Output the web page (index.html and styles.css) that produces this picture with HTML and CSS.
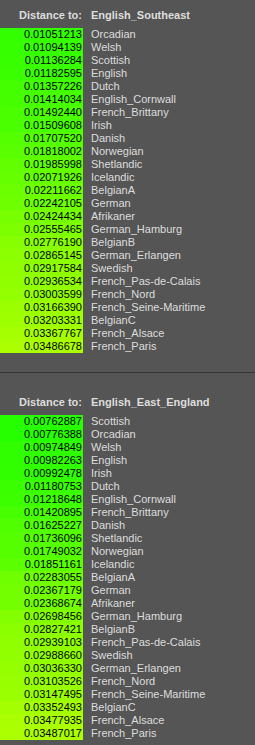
FILE: index.html
```html
<!DOCTYPE html>
<html>
<head>
<meta charset="utf-8">
<link rel="stylesheet" href="styles.css">
</head>
<body>
<section class="block first">
  <div class="row head"><div class="lbl">Distance to:</div><div class="name">English_Southeast</div></div>
  <div class="rows">
    <div class="row"><div class="val" style="background:#34ff00">0.01051213</div><div class="name">Orcadian</div></div>
    <div class="row"><div class="val" style="background:#36ff00">0.01094139</div><div class="name">Welsh</div></div>
    <div class="row"><div class="val" style="background:#38ff00">0.01136284</div><div class="name">Scottish</div></div>
    <div class="row"><div class="val" style="background:#3aff00">0.01182595</div><div class="name">English</div></div>
    <div class="row"><div class="val" style="background:#43ff00">0.01357226</div><div class="name">Dutch</div></div>
    <div class="row"><div class="val" style="background:#45ff00">0.01414034</div><div class="name">English_Cornwall</div></div>
    <div class="row"><div class="val" style="background:#49ff00">0.01492440</div><div class="name">French_Brittany</div></div>
    <div class="row"><div class="val" style="background:#4aff00">0.01509608</div><div class="name">Irish</div></div>
    <div class="row"><div class="val" style="background:#54ff00">0.01707520</div><div class="name">Danish</div></div>
    <div class="row"><div class="val" style="background:#59ff00">0.01818002</div><div class="name">Norwegian</div></div>
    <div class="row"><div class="val" style="background:#61ff00">0.01985998</div><div class="name">Shetlandic</div></div>
    <div class="row"><div class="val" style="background:#66ff00">0.02071926</div><div class="name">Icelandic</div></div>
    <div class="row"><div class="val" style="background:#6cff00">0.02211662</div><div class="name">BelgianA</div></div>
    <div class="row"><div class="val" style="background:#6eff00">0.02242105</div><div class="name">German</div></div>
    <div class="row"><div class="val" style="background:#77ff00">0.02424434</div><div class="name">Afrikaner</div></div>
    <div class="row"><div class="val" style="background:#7dff00">0.02555465</div><div class="name">German_Hamburg</div></div>
    <div class="row"><div class="val" style="background:#88ff00">0.02776190</div><div class="name">BelgianB</div></div>
    <div class="row"><div class="val" style="background:#8cff00">0.02865145</div><div class="name">German_Erlangen</div></div>
    <div class="row"><div class="val" style="background:#8fff00">0.02917584</div><div class="name">Swedish</div></div>
    <div class="row"><div class="val" style="background:#90ff00">0.02936534</div><div class="name">French_Pas-de-Calais</div></div>
    <div class="row"><div class="val" style="background:#93ff00">0.03003599</div><div class="name">French_Nord</div></div>
    <div class="row"><div class="val" style="background:#9bff00">0.03166390</div><div class="name">French_Seine-Maritime</div></div>
    <div class="row"><div class="val" style="background:#9dff00">0.03203331</div><div class="name">BelgianC</div></div>
    <div class="row"><div class="val" style="background:#a5ff00">0.03367767</div><div class="name">French_Alsace</div></div>
    <div class="row"><div class="val" style="background:#abff00">0.03486678</div><div class="name">French_Paris</div></div>
  </div>
</section>
<hr class="sep">
<section class="block second">
  <div class="row head"><div class="lbl">Distance to:</div><div class="name">English_East_England</div></div>
  <div class="rows">
    <div class="row"><div class="val" style="background:#25ff00">0.00762887</div><div class="name">Scottish</div></div>
    <div class="row"><div class="val" style="background:#26ff00">0.00776388</div><div class="name">Orcadian</div></div>
    <div class="row"><div class="val" style="background:#30ff00">0.00974849</div><div class="name">Welsh</div></div>
    <div class="row"><div class="val" style="background:#30ff00">0.00982263</div><div class="name">English</div></div>
    <div class="row"><div class="val" style="background:#31ff00">0.00992478</div><div class="name">Irish</div></div>
    <div class="row"><div class="val" style="background:#3aff00">0.01180753</div><div class="name">Dutch</div></div>
    <div class="row"><div class="val" style="background:#3cff00">0.01218648</div><div class="name">English_Cornwall</div></div>
    <div class="row"><div class="val" style="background:#46ff00">0.01420895</div><div class="name">French_Brittany</div></div>
    <div class="row"><div class="val" style="background:#50ff00">0.01625227</div><div class="name">Danish</div></div>
    <div class="row"><div class="val" style="background:#55ff00">0.01736096</div><div class="name">Shetlandic</div></div>
    <div class="row"><div class="val" style="background:#56ff00">0.01749032</div><div class="name">Norwegian</div></div>
    <div class="row"><div class="val" style="background:#5bff00">0.01851161</div><div class="name">Icelandic</div></div>
    <div class="row"><div class="val" style="background:#70ff00">0.02283055</div><div class="name">BelgianA</div></div>
    <div class="row"><div class="val" style="background:#74ff00">0.02367179</div><div class="name">German</div></div>
    <div class="row"><div class="val" style="background:#74ff00">0.02368674</div><div class="name">Afrikaner</div></div>
    <div class="row"><div class="val" style="background:#84ff00">0.02698456</div><div class="name">German_Hamburg</div></div>
    <div class="row"><div class="val" style="background:#8bff00">0.02827421</div><div class="name">BelgianB</div></div>
    <div class="row"><div class="val" style="background:#90ff00">0.02939103</div><div class="name">French_Pas-de-Calais</div></div>
    <div class="row"><div class="val" style="background:#92ff00">0.02988660</div><div class="name">Swedish</div></div>
    <div class="row"><div class="val" style="background:#95ff00">0.03036330</div><div class="name">German_Erlangen</div></div>
    <div class="row"><div class="val" style="background:#98ff00">0.03103526</div><div class="name">French_Nord</div></div>
    <div class="row"><div class="val" style="background:#9aff00">0.03147495</div><div class="name">French_Seine-Maritime</div></div>
    <div class="row"><div class="val" style="background:#a4ff00">0.03352493</div><div class="name">BelgianC</div></div>
    <div class="row"><div class="val" style="background:#aaff00">0.03477935</div><div class="name">French_Alsace</div></div>
    <div class="row"><div class="val" style="background:#abff00">0.03487017</div><div class="name">French_Paris</div></div>
  </div>
</section>
</body>
</html>
```
FILE: styles.css
```css
html, body {
  margin: 0;
  padding: 0;
  background: #555555;
}
body {
  width: 255px;
  height: 745px;
  overflow: hidden;
  font-family: "Liberation Sans", Arial, sans-serif;
  font-size: 11px;
  color: #dddddd;
}
.block.first {
  padding-top: 9px;
}
.block.second {
  padding-top: 23px;
}
.row {
  display: grid;
  grid-template-columns: 83px 1fr;
  height: 13px;
  line-height: 13px;
  white-space: nowrap;
}
.head {
  font-weight: bold;
  margin-bottom: 6px;
}
.lbl, .val {
  text-align: right;
  padding-right: 1px;
}
.val {
  color: #000000;
}
.name {
  padding-left: 8px;
}
.sep {
  margin: 19px 0 0 0;
  border: 0;
  height: 1px;
  background: #333333;
}
```
